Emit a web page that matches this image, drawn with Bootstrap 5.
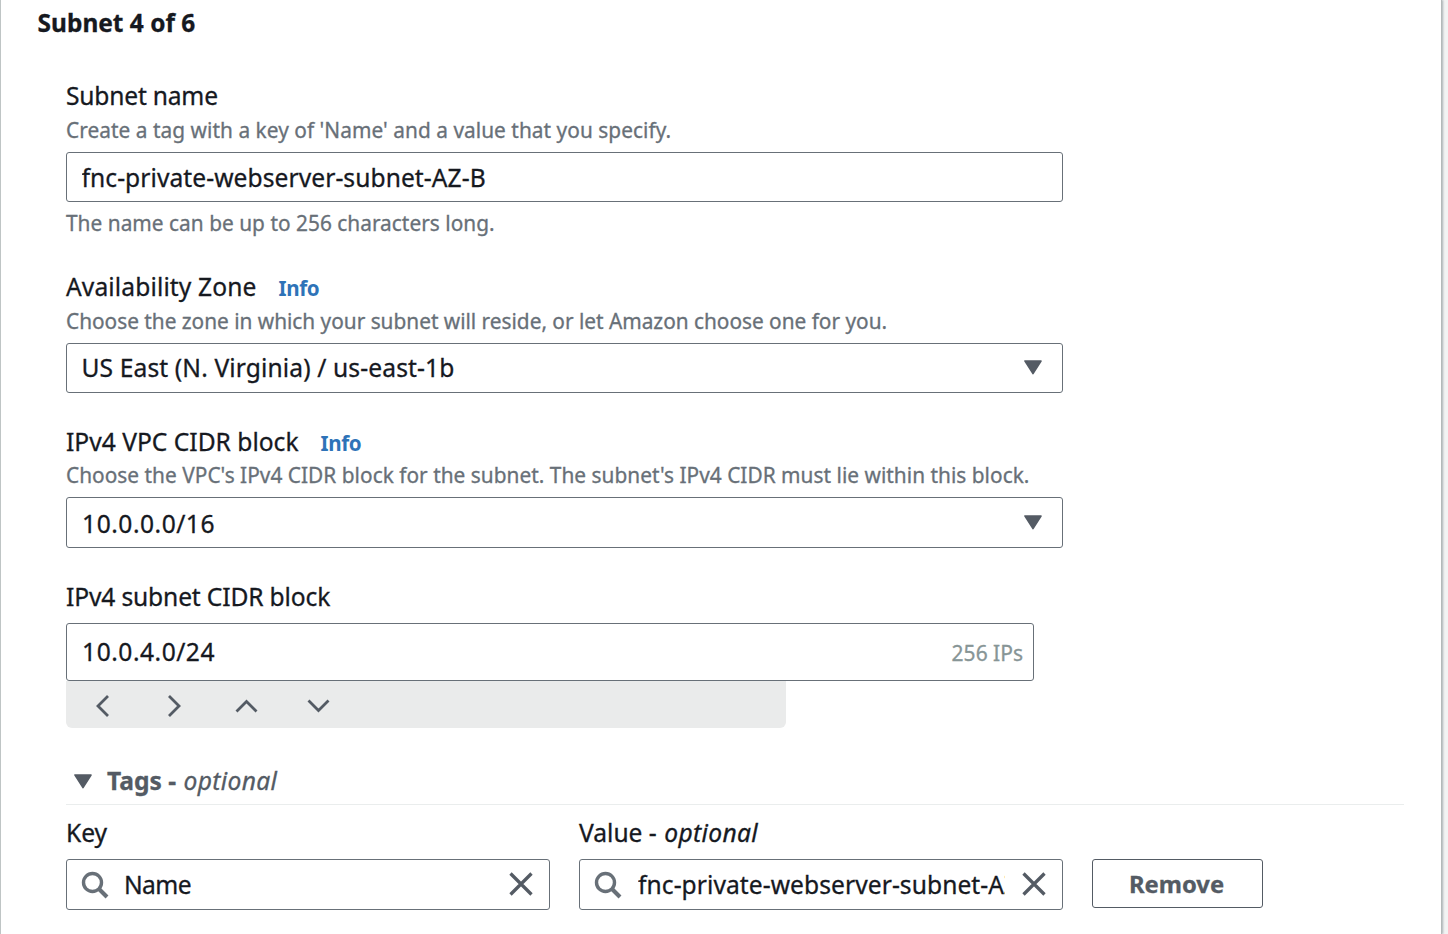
<!DOCTYPE html>
<html lang="en">
<head>
<meta charset="utf-8">
<meta name="viewport" content="width=device-width, initial-scale=1">
<title>Create subnet</title>
<link href="https://cdn.jsdelivr.net/npm/bootstrap@5.3.0/dist/css/bootstrap.min.css" rel="stylesheet">
<style>
  :root { --ink: #16191f; --muted: #687078; --icon: #545b64; }
  body { font-family: "Noto Sans", "Open Sans", sans-serif; font-size: 24.6px; color: var(--ink); background: #f2f3f3; overflow: hidden; -webkit-text-stroke: .3px; }
  .panel { width: 1442px; height: 934px; padding: 6px 37px 0 36px; border-left: 1px solid #bfc5c5; border-right: 1px solid #b3b9b9; box-shadow: 1px 0 2px rgba(0,28,36,.3); }
  .panel-title { font-size: 24.45px; line-height: 34px; font-weight: 700; margin: 0 0 39px; padding-left: .6px; }
  .fields { padding-left: 29px; }
  .field { width: 997px; }
  .field-label { display: block; line-height: 34px; margin: 0; white-space: nowrap; }
  .hint { font-size: 20.85px; line-height: 30px; color: var(--muted); white-space: nowrap; }
  .info { font-size: 20.6px; letter-spacing: -.4px; font-weight: 700; color: #2e73b8; text-decoration: none; margin-left: 22px; line-height: 28px; -webkit-text-stroke: 0; }
  .box { border: 1px solid #687078; border-radius: 3px; background: #fff; height: 50px; width: 100%; padding: 0 20px 0 14.5px; color: var(--ink); }
  .box input, input.box { font: inherit; color: var(--ink); outline: 0; letter-spacing: .06px; }
  .box input { border: 0; padding: 0; background: none; min-width: 0; height: 46px; }
  .h51 { height: 51px; }
  .cidr { width: 968px; height: 58px; padding-right: 10px; padding-bottom: 2px; }
  .ips { font-size: 21px; color: #879596; padding-top: 6px; }
  .stepper { width: 720px; height: 47px; background: #eaebeb; border-radius: 0 0 6px 6px; padding-left: 25px; gap: 48px; }
  .tags-head { color: var(--icon); font-weight: 700; line-height: 34px; padding-bottom: 6px; border-bottom: 1px solid #eaeded; width: 1338px; margin-top: 36px; }
  em { letter-spacing: .35px; padding-left: 1px; }
  .tag-box { width: 484px; height: 51px; padding: 0 14px; }
  .remove { width: 171px; height: 49px; border: 1px solid #545b64; border-radius: 3px; background: #fff; color: var(--icon); font-weight: 700; font-size: 23.8px; padding: 2px 2px 0 0; }
  .num, .box input.num { letter-spacing: .5px; padding-left: .6px; }
  .tight { letter-spacing: -.2px; }
  .loose { letter-spacing: .12px; }
  .gap-hint { margin-top: 7px; }
  .gap-label { margin-top: 9px; }
  svg { display: block; flex: none; }
  .ico { fill: none; stroke: var(--icon); stroke-width: 2.8; }
</style>
</head>
<body>
<svg width="0" height="0" class="position-absolute">
  <symbol id="caret" viewBox="0 0 18 15"><path d="M1 1H17L9 13.6Z" fill="#545b64" stroke="#545b64" stroke-width="1.6" stroke-linejoin="round"/></symbol>
  <symbol id="search" viewBox="0 0 28 28"><circle cx="11.5" cy="11.5" r="9" fill="none" stroke="#687078" stroke-width="3.4"/><path d="M18 18L26 26" stroke="#687078" stroke-width="4"/></symbol>
  <symbol id="close" viewBox="0 0 24 24"><path d="M1.5 1.5L22.5 22.5M22.5 1.5L1.5 22.5" fill="none" stroke="#545b64" stroke-width="3.3"/></symbol>
</svg>
<main class="panel bg-white">
  <h2 class="panel-title">Subnet 4 of 6</h2>
  <form class="fields">
    <div class="field">
      <label class="field-label tight" for="name">Subnet name</label>
      <div class="hint" style="margin-top:2px;letter-spacing:.04px">Create a tag with a key of 'Name' and a value that you specify.</div>
      <input id="name" class="box d-block gap-hint" value="fnc-private-webserver-subnet-AZ-B">
      <div class="hint" style="margin-top:6px;letter-spacing:.02px">The name can be up to 256 characters long.</div>
    </div>
    <div class="field" style="margin-top:32px">
      <div class="d-flex align-items-baseline"><span class="field-label loose">Availability Zone</span><a class="info" href="#">Info</a></div>
      <div class="hint" style="margin-top:2px;letter-spacing:-.02px">Choose the zone in which your subnet will reside, or let Amazon choose one for you.</div>
      <div class="box gap-hint d-flex align-items-center justify-content-between">
        <span class="loose">US East (N. Virginia) / us-east-1b</span>
        <svg width="18" height="15" style="margin-bottom:2px"><use href="#caret"/></svg>
      </div>
    </div>
    <div class="field" style="margin-top:32px">
      <div class="d-flex align-items-baseline"><span class="field-label">IPv4 VPC CIDR block</span><a class="info" href="#">Info</a></div>
      <div class="hint" style="margin-top:1px;letter-spacing:.02px">Choose the VPC's IPv4 CIDR block for the subnet. The subnet's IPv4 CIDR must lie within this block.</div>
      <div class="box h51 gap-hint d-flex align-items-center justify-content-between">
        <span class="num pt-1">10.0.0.0/16</span>
        <svg width="18" height="15"><use href="#caret"/></svg>
      </div>
    </div>
    <div class="field" style="margin-top:32px">
      <label class="field-label" style="letter-spacing:-.15px" for="cidr">IPv4 subnet CIDR block</label>
      <div class="box cidr gap-label d-flex align-items-center">
        <input id="cidr" class="num flex-grow-1" value="10.0.4.0/24">
        <span class="ips">256 IPs</span>
      </div>
      <div class="stepper d-flex align-items-center">
        <svg class="ico" width="24" height="24"><path d="M17 3L7 13L17 23"/></svg>
        <svg class="ico" width="24" height="24"><path d="M6 3L16 13L6 23"/></svg>
        <svg class="ico" width="24" height="24"><path d="M1.5 18.5L11.5 8.5L21.5 18.5"/></svg>
        <svg class="ico" width="24" height="24"><path d="M1.5 7.5L11.5 17.5L21.5 7.5"/></svg>
      </div>
    </div>
    <div class="tags-head d-flex align-items-center">
      <svg width="18" height="15" style="margin:0 15px 0 8px"><use href="#caret"/></svg>
      <span>Tags - <em class="fw-normal">optional</em></span>
    </div>
    <div class="d-flex align-items-start" style="gap:29px;margin-top:11px">
      <div>
        <label class="field-label" for="key">Key</label>
        <div class="box tag-box gap-label d-flex align-items-center">
          <svg width="28" height="28"><use href="#search"/></svg>
          <input id="key" class="flex-grow-1" style="margin:0 15px 0 15px;letter-spacing:-.6px" value="Name">
          <svg width="24" height="24" style="margin:0 2px 1px 0"><use href="#close"/></svg>
        </div>
      </div>
      <div>
        <label class="field-label" for="value">Value - <em>optional</em></label>
        <div class="box tag-box gap-label d-flex align-items-center">
          <svg width="28" height="28"><use href="#search"/></svg>
          <input id="value" class="flex-grow-1" style="margin:0 17px 0 16px" value="fnc-private-webserver-subnet-AZ-B">
          <svg width="24" height="24" style="margin:0 2px 1px 0"><use href="#close"/></svg>
        </div>
      </div>
      <button type="button" class="remove" style="margin-top:43px">Remove</button>
    </div>
  </form>
</main>
<script src="https://cdn.jsdelivr.net/npm/bootstrap@5.3.0/dist/js/bootstrap.bundle.min.js"></script>
</body>
</html>
